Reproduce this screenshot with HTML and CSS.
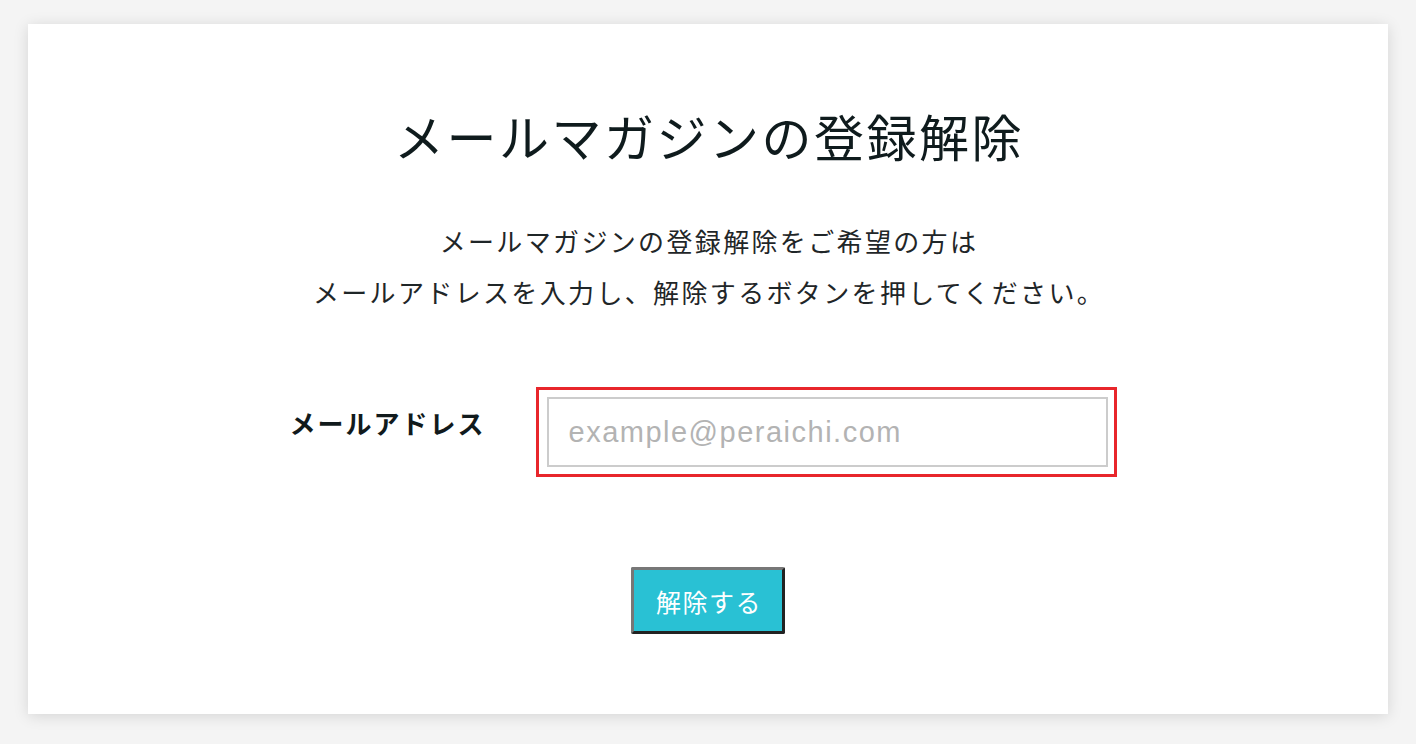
FILE: index.html
```html
<!DOCTYPE html>
<html lang="ja">
<head>
<meta charset="utf-8">
<title>メールマガジンの登録解除</title>
<link rel="stylesheet" href="styles.css">
</head>
<body>
<main class="card">
  <h1 class="title">メールマガジンの登録解除</h1>
  <p class="lead">メールマガジンの登録解除をご希望の方は<br>メールアドレスを入力し、解除するボタンを押してください。</p>
  <form class="form">
    <div class="row">
      <label class="label" for="email">メールアドレス</label>
      <div class="field-wrap">
        <input class="field" id="email" type="email" placeholder="example@peraichi.com">
      </div>
    </div>
    <button class="btn" type="button">解除する</button>
  </form>
</main>
</body>
</html>
```

FILE: styles.css
```css
html, body {
  margin: 0;
  padding: 0;
  background: #f4f4f4;
}
body {
  padding: 24px 28px 30px;
  font-family: "Noto Sans CJK JP", "Noto Sans", sans-serif;
  color: #1b2326;
}
.card {
  background: #fff;
  height: 690px;
  box-sizing: border-box;
  box-shadow: 0 2px 14px rgba(0, 0, 0, 0.13);
  display: flex;
  flex-direction: column;
  align-items: center;
  padding-top: 81px;
}
.title {
  margin: 0;
  font-size: 50px;
  font-weight: 400;
  line-height: 60px;
  letter-spacing: 2.5px;
  color: #0f1b1d;
  padding-left: 2px;
}
.lead {
  margin: 50px 0 0;
  font-size: 26px;
  line-height: 51px;
  letter-spacing: 2.35px;
  text-align: center;
  color: #1f2628;
  padding-left: 2px;
}
.form {
  margin-top: 70px;
  display: flex;
  flex-direction: column;
  align-items: center;
}
.row {
  display: flex;
  align-items: flex-start;
  gap: 50px;
  margin-left: -10px;
}
.label {
  font-size: 26px;
  font-weight: 700;
  line-height: 36px;
  letter-spacing: 2px;
  margin-top: 18px;
  color: #111a1c;
}
.field-wrap {
  border: 3px solid #e8262b;
  padding: 7px 6px 7px 8px;
  display: flex;
}
.field {
  width: 561px;
  height: 70px;
  box-sizing: border-box;
  border: 2px solid #cccccc;
  padding: 0 20px;
  margin: 0;
  font-family: "Liberation Sans", Arial, sans-serif;
  font-size: 29px;
  letter-spacing: 1.5px;
  color: #333;
  outline: none;
  background: #fff;
}
.field::placeholder {
  color: #b3b3b3;
}
.btn {
  margin-top: 90px;
  width: 154px;
  height: 67px;
  box-sizing: border-box;
  background: #29c1d4;
  color: #fff;
  border-style: solid;
  border-width: 3px;
  border-color: #777 #222 #222 #777;
  border-radius: 2px;
  font-family: "Noto Sans CJK JP", sans-serif;
  font-size: 25px;
  letter-spacing: 1.5px;
  padding: 0 0 0 2px;
  cursor: pointer;
}
```
